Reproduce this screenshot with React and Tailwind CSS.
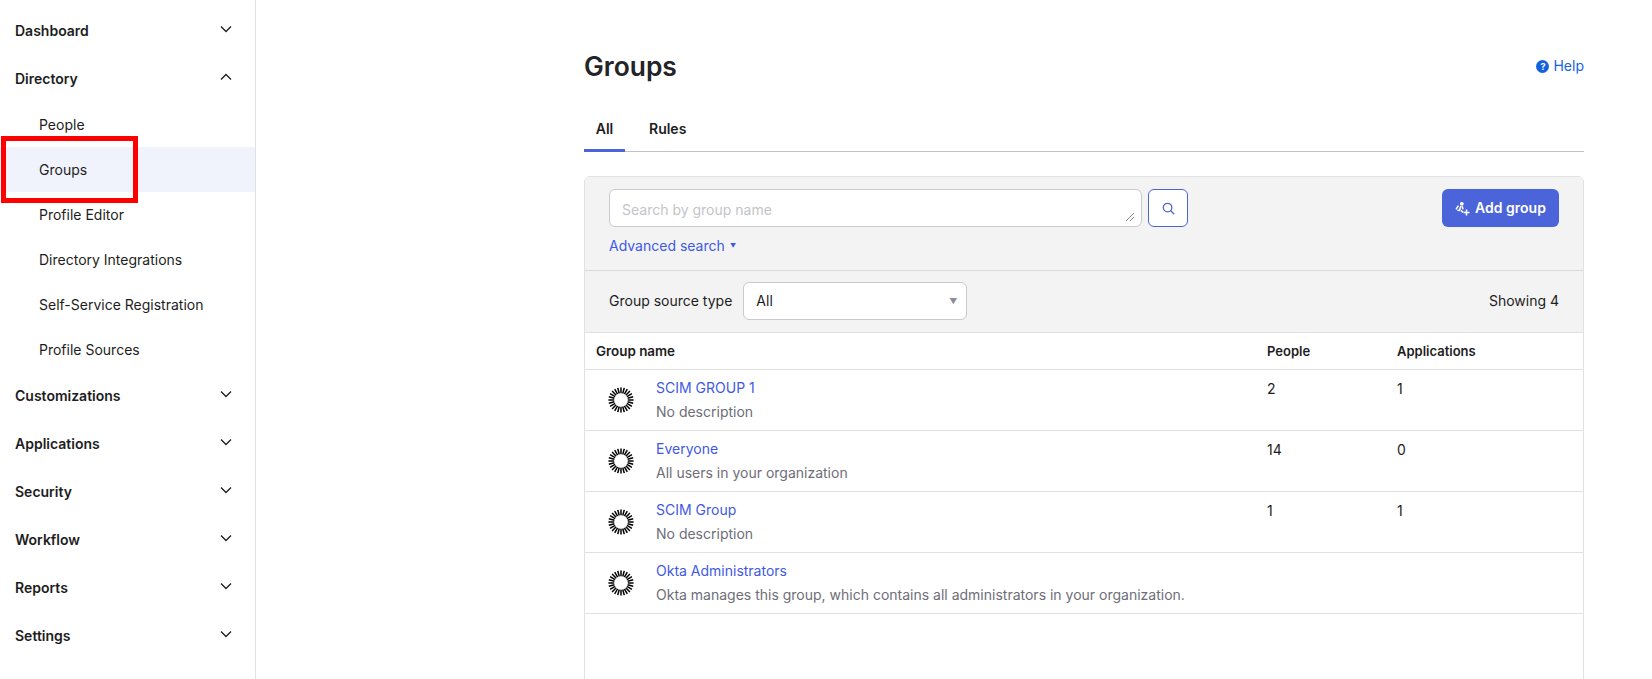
const font = { fontFamily: "Inter, 'Noto Sans', sans-serif" };

const Chevron = ({ up }) => (
  <svg viewBox="0 0 12 8" className="h-[8px] w-[12px] text-[#1d1d21]" fill="none" stroke="currentColor" strokeWidth="1.3">
    <path d={up ? "M1 6.5 6 1.5l5 5" : "M1 1.5l5 5 5-5"} />
  </svg>
);

const NavHead = ({ label, up, short }) => (
  <div className={`flex items-center justify-between pl-[15px] pr-[23px] text-sm font-semibold text-[#1d1d21] ${short ? "h-[47px]" : "h-[48px]"}`}>
    <span>{label}</span>
    <span className="-translate-y-[2px]"><Chevron up={up} /></span>
  </div>
);

const NavSub = ({ label, active }) => (
  <div className={`flex h-[45px] items-center pl-[39px] text-sm text-[#1d1d21] ${active ? "bg-[#f1f3fc]" : ""}`}>{label}</div>
);

const Aura = () => (
  <svg viewBox="0 0 26 26" className="h-[26px] w-[26px]" stroke="#000" strokeWidth="1.5">
    {Array.from({ length: 24 }).map((_, i) => {
      const a = (i * Math.PI) / 12;
      return (
        <line
          key={i}
          x1={13 + 6.8 * Math.cos(a)}
          y1={13 + 6.8 * Math.sin(a)}
          x2={13 + 12.6 * Math.cos(a)}
          y2={13 + 12.6 * Math.sin(a)}
        />
      );
    })}
  </svg>
);

const rows = [
  { name: "SCIM GROUP 1", desc: "No description", people: "2", apps: "1" },
  { name: "Everyone", desc: "All users in your organization", people: "14", apps: "0" },
  { name: "SCIM Group", desc: "No description", people: "1", apps: "1" },
  { name: "Okta Administrators", desc: "Okta manages this group, which contains all administrators in your organization.", people: "", apps: "" },
];

export default function App() {
  return (
    <div style={font} className="relative flex h-[679px] overflow-hidden bg-white text-sm text-[#1d1d21]">
      <aside className="w-[256px] shrink-0 border-r border-[#e1e1e1] pt-[7px]">
        <NavHead label="Dashboard" />
        <NavHead label="Directory" up short />
        <NavSub label="People" />
        <NavSub label="Groups" active />
        <NavSub label="Profile Editor" />
        <NavSub label="Directory Integrations" />
        <NavSub label="Self-Service Registration" />
        <NavSub label="Profile Sources" />
        <NavHead label="Customizations" />
        <NavHead label="Applications" />
        <NavHead label="Security" />
        <NavHead label="Workflow" />
        <NavHead label="Reports" />
        <NavHead label="Settings" />
      </aside>

      {/* callout drawn over the screenshot */}
      <div className="absolute left-[1px] top-[136px] h-[67px] w-[137px] border-[5px] border-[#f00]" />

      <main className="min-w-0 flex-1 pl-[328px] pr-[68px] pt-[48px]">
        <div className="flex h-[36px] items-center justify-between">
          <h1 className="text-[26.4px] font-semibold leading-[36px] text-[#242428]">Groups</h1>
          <a className="flex items-center gap-[4px] text-[#1662dd]">
            <span className="flex h-[13px] w-[13px] items-center justify-center rounded-full bg-[#1662dd] text-[9px] font-bold leading-none text-white">?</span>
            Help
          </a>
        </div>

        <div className="mt-[22px] flex h-[46px] gap-[12px] border-b border-[#c1c1c8]">
          <div className="flex h-[46px] w-[41px] items-center justify-center border-b-[3px] border-[#4c64d9] pt-[3px] font-semibold">All</div>
          <div className="flex h-[46px] items-center border-b-[3px] border-transparent px-3 pt-[3px] font-semibold">Rules</div>
        </div>

        <section className="mt-[24px] h-[600px] rounded-t-[6px] border border-[#e1e1e1]">
          <div className="flex h-[94px] justify-between rounded-t-[6px] border-b border-[#d7d7dc] bg-[#f3f3f4] px-[24px] pt-[12px]">
            <div>
              <div className="flex gap-[6px]">
                <div className="relative flex h-[38px] w-[533px] items-center rounded-[6px] border border-[#c9c9ce] bg-white px-[12px] pt-[3px] text-[#c4c4c8]">
                  Search by group name
                  <svg viewBox="0 0 8 8" className="absolute bottom-[5px] right-[7px] h-[8px] w-[8px]" stroke="#555" strokeWidth="0.7">
                    <path d="M0 8 8 0M4 8l4-4" />
                  </svg>
                </div>
                <button className="flex h-[38px] w-[40px] items-center justify-center rounded-[6px] border border-[#4c64d9] bg-white">
                  <svg viewBox="0 0 14 14" className="h-[13px] w-[13px]" fill="none" stroke="#4c64d9" strokeWidth="1.4">
                    <circle cx="6" cy="6" r="4.6" />
                    <path d="m9.4 9.4 3.8 3.8" />
                  </svg>
                </button>
              </div>
              <div className="mt-[9px] flex items-center gap-[6px] text-[#3f59e4]">
                <span className="w-[115px] whitespace-nowrap">Advanced search</span>
                <span className="text-[6px] leading-none">▼</span>
              </div>
            </div>
            <button className="flex h-[38px] w-[117px] items-center justify-center gap-[5px] rounded-[6px] bg-[#4c64d9] font-semibold text-white">
              <svg viewBox="0 0 15 15" className="h-[15px] w-[15px]" fill="none" stroke="#fff" strokeWidth="1.5">
                <circle cx="6.8" cy="2.8" r="1.9" fill="#fff" stroke="none" />
                <path d="M5.8 5 4.6 9.2M7.2 5.2 8 8.2M3.4 4.6 1 8.4M5 9.6l-2.6-.4M6 9.4l2 2" />
                <path d="M11.5 8.5v6M8.5 11.5h6" />
              </svg>
              Add group
            </button>
          </div>

          <div className="flex h-[62px] items-center justify-between border-b border-[#e1e1e1] bg-[#f3f3f4] px-[24px] pb-[1px]">
            <div className="flex items-center gap-[11px]">
              <span>Group source type</span>
              <div className="relative flex h-[38px] w-[224px] items-center rounded-[6px] border border-[#c9c9ce] bg-white pl-[12px]">
                All
                <span className="absolute right-[9px] top-[13px] text-[8px] text-[#8c8c96]">▼</span>
              </div>
            </div>
            <span>Showing 4</span>
          </div>

          <div className="grid h-[37px] grid-cols-[670px_130px_1fr] items-center border-b border-[#e1e1e1] pt-[1px] text-[13px] font-semibold">
            <div className="pl-[11px] text-[13.4px]">Group name</div>
            <div className="px-3">People</div>
            <div className="px-3">Applications</div>
          </div>

          {rows.map((r) => (
            <div key={r.name} className="grid h-[61px] grid-cols-[670px_130px_1fr] border-b border-[#e1e1e1]">
              <div className="flex items-center">
                <div className="ml-[23px] w-[48px] shrink-0"><Aura /></div>
                <div className="pt-[0.5px]">
                  <div className="leading-[24px] text-[#3f59e4]">{r.name}</div>
                  <div className="leading-[24px] text-[#6e6e78]">{r.desc}</div>
                </div>
              </div>
              <div className="px-3 pt-[7px] leading-[24px]">{r.people}</div>
              <div className="px-3 pt-[7px] leading-[24px]">{r.apps}</div>
            </div>
          ))}
        </section>
      </main>
    </div>
  );
}
